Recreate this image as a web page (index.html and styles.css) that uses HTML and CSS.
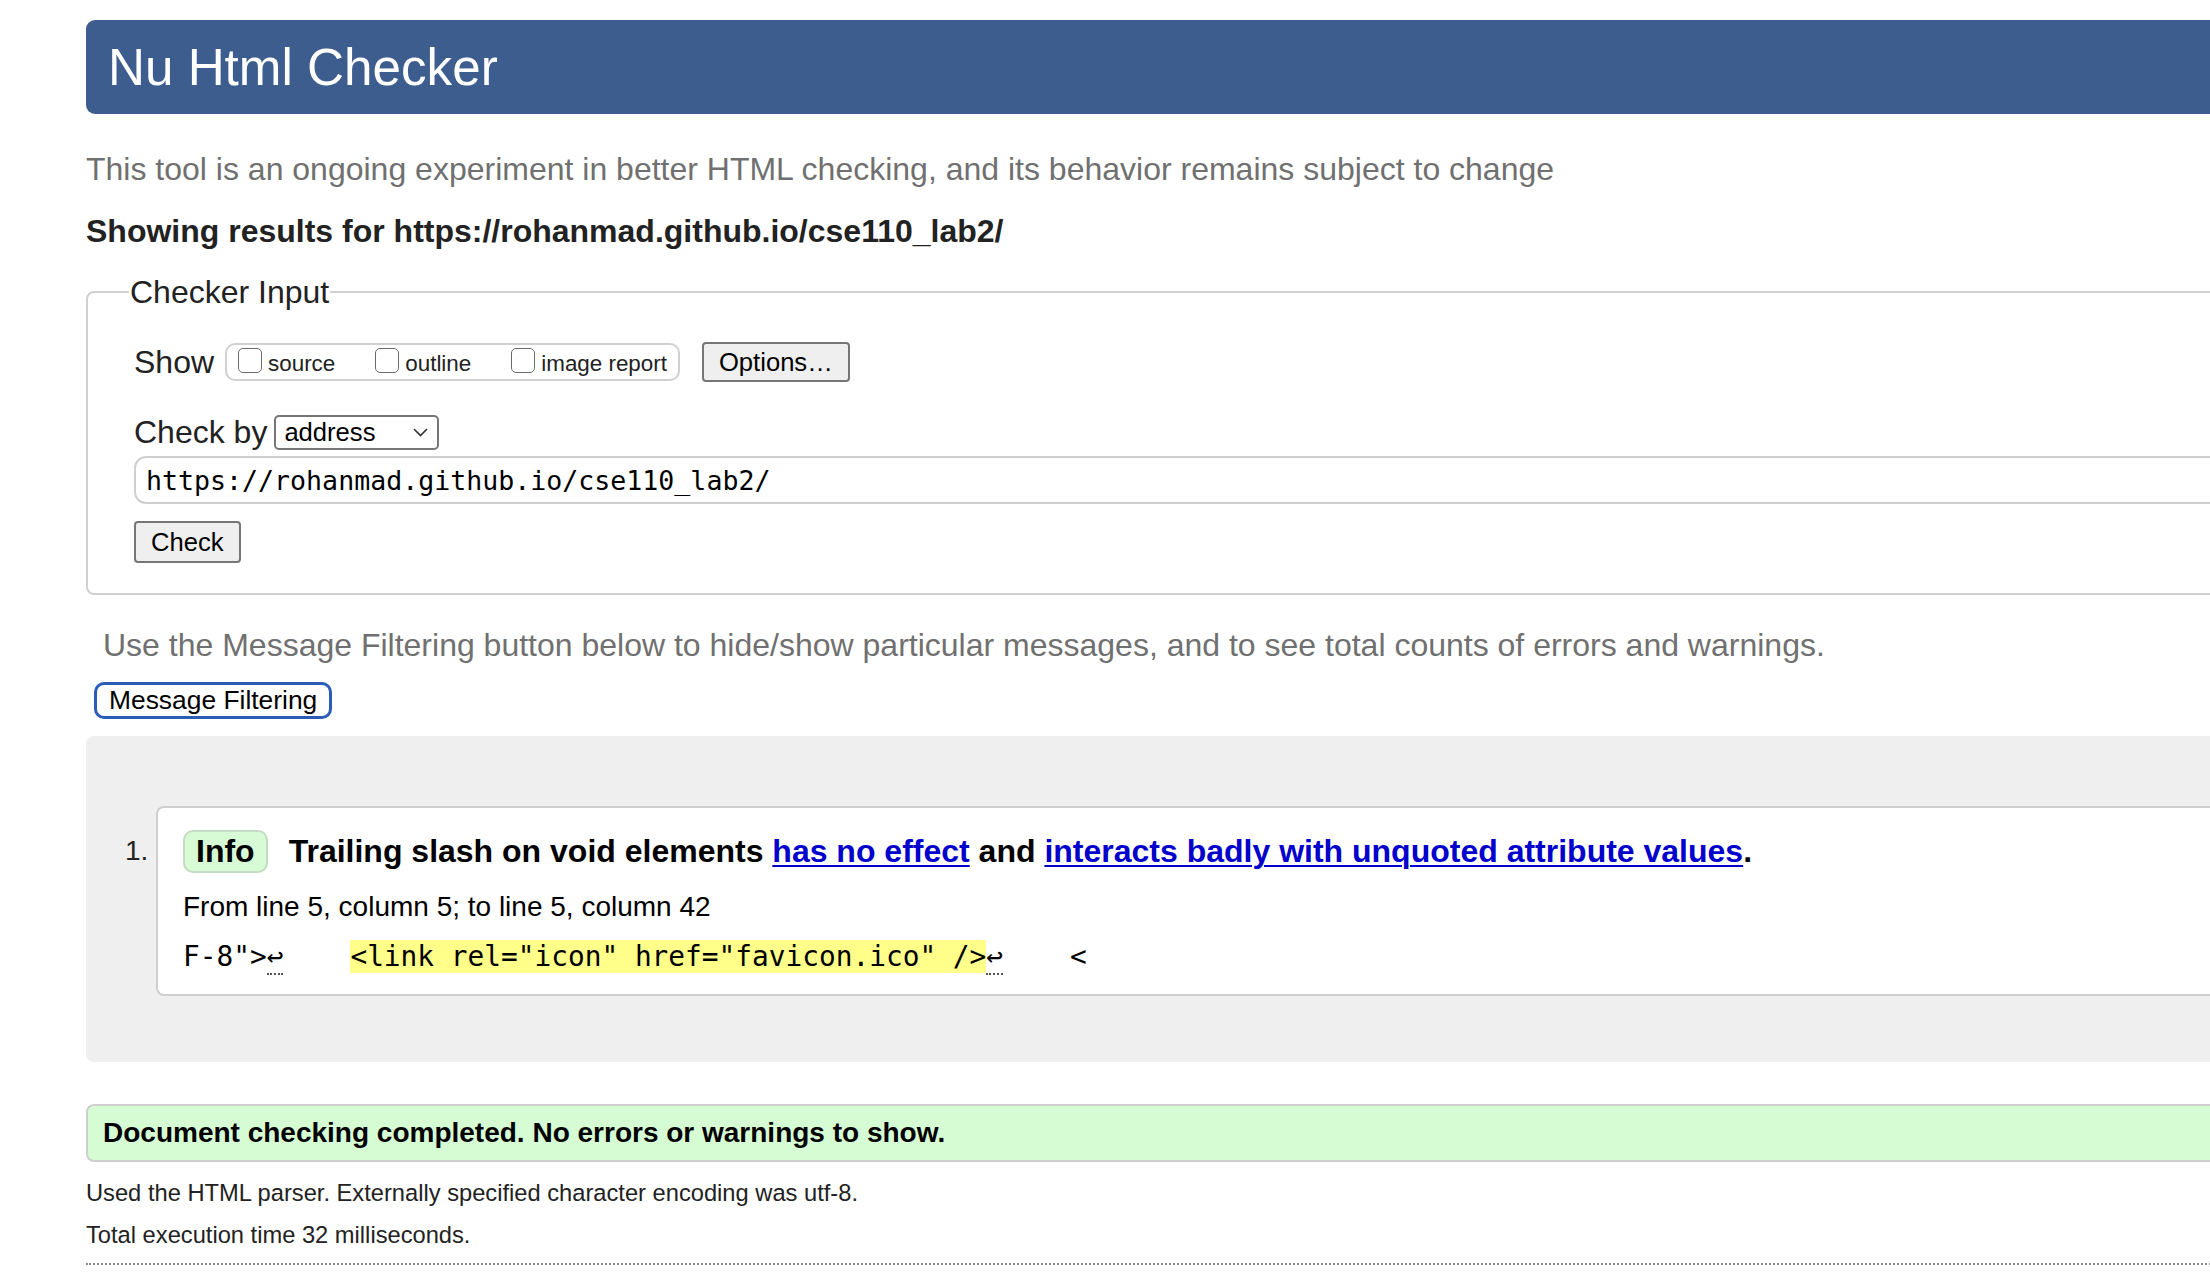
FILE: index.html
```html
<!DOCTYPE html>
<html lang="en">
<head>
<meta charset="utf-8">
<title>Showing results for https://rohanmad.github.io/cse110_lab2/ - Nu Html Checker</title>
<link rel="stylesheet" href="styles.css">
</head>
<body>
<div class="page">
  <h1 class="title">Nu Html Checker</h1>
  <p class="intro">This tool is an ongoing experiment in better HTML checking, and its behavior remains subject to change</p>
  <p class="showing">Showing results for https://rohanmad.github.io/cse110_lab2/</p>
  <form class="checker">
    <fieldset class="fs">
      <legend class="legend">Checker Input</legend>
      <div class="row row-show">
        <span class="label">Show</span>
        <span class="show-group">
          <label class="opt"><input type="checkbox" class="cb"><span>source</span></label>
          <label class="opt"><input type="checkbox" class="cb"><span>outline</span></label>
          <label class="opt"><input type="checkbox" class="cb"><span>image report</span></label>
        </span>
        <button type="button" class="btn options">Options…</button>
      </div>
      <div class="row row-by">
        <span class="label">Check by</span>
        <span class="select"><span>address</span><svg class="chev" width="15" height="9" viewBox="0 0 15 9"><polyline points="1,1 7.5,7.5 14,1" fill="none" stroke="#333" stroke-width="1.6"/></svg></span>
      </div>
      <input class="url" type="text" value="https://rohanmad.github.io/cse110_lab2/">
      <button type="button" class="btn check">Check</button>
    </fieldset>
  </form>
  <p class="filter-note">Use the Message Filtering button below to hide/show particular messages, and to see total counts of errors and warnings.</p>
  <button type="button" class="filter-btn">Message Filtering</button>
  <div class="results">
    <ol class="msgs">
      <li class="msg">
        <span class="num">1.</span>
        <div class="card">
          <p class="head"><strong class="badge">Info</strong><span>Trailing slash on void elements <a href="#">has no effect</a> and <a href="#">interacts badly with unquoted attribute values</a>.</span></p>
          <p class="loc">From line 5, column 5; to line 5, column 42</p>
          <p class="code">F-8"&gt;<b class="lf">↩</b>    <mark class="hl">&lt;link rel="icon" href="favicon.ico" /&gt;</mark><b class="lf">↩</b>    &lt;</p>
        </div>
      </li>
    </ol>
  </div>
  <p class="done">Document checking completed. No errors or warnings to show.</p>
  <p class="stats">Used the HTML parser. Externally specified character encoding was utf-8.</p>
  <p class="stats stats-time">Total execution time 32 milliseconds.</p>
  <hr class="sep">
</div>
</body>
</html>
```
FILE: styles.css
```css
html {
  overflow: hidden;
}
body {
  margin: 0;
  background: #fff;
  color: #222;
  font-family: "Liberation Sans", Arial, Helvetica, sans-serif;
}
.page {
  width: 2400px;
  padding: 20px 0 0 86px;
}
.title {
  margin: 0;
  height: 94px;
  box-sizing: border-box;
  display: flex;
  align-items: center;
  padding-left: 22px;
  background: #3e5d8f;
  color: #fff;
  font-size: 51.2px;
  font-weight: normal;
  border-radius: 9px 0 0 9px;
}
.intro {
  margin: 36px 0 0;
  font-size: 32px;
  line-height: 38px;
  color: #707070;
}
.showing {
  margin: 24px 0 0;
  font-size: 32px;
  line-height: 38px;
  font-weight: bold;
  color: #222;
}
.checker {
  margin: 23px 0 0;
}
.fs {
  margin: 0;
  min-width: 0;
  padding: 31px 0 30px 46px;
  border: 2px solid #d0d0d0;
  border-radius: 8px 0 0 8px;
}
.legend {
  margin-left: -5px;
  padding: 0 1px;
  font-size: 32px;
  line-height: 38px;
  color: #222;
}
.row {
  display: flex;
  align-items: center;
}
.row-show {
  height: 40px;
}
.label {
  font-size: 32px;
  line-height: 38px;
  color: #222;
}
.show-group {
  margin-left: 11px;
  display: flex;
  align-items: center;
  gap: 40px;
  height: 38px;
  box-sizing: border-box;
  border: 2px solid #d0d0d0;
  border-radius: 10px;
  padding: 0 11px;
}
.opt {
  display: flex;
  align-items: center;
  font-size: 22.4px;
  color: #222;
  padding-top: 4px;
}
.cb {
  -webkit-appearance: none;
  appearance: none;
  width: 24px;
  height: 25px;
  margin: 0 6px 8px 0;
  box-sizing: border-box;
  border: 1.5px solid #6b6b6b;
  border-radius: 5px;
  background: #fff;
}
.btn {
  font-family: "Liberation Sans", Arial, Helvetica, sans-serif;
  font-size: 25.6px;
  color: #000;
  background: #efefef;
  border: 2px solid #767676;
  border-radius: 4px;
  padding: 0 15px;
  box-sizing: border-box;
}
.options {
  margin-left: 22px;
  height: 40px;
}
.row-by {
  margin-top: 31px;
  height: 38px;
}
.select {
  margin-left: 7px;
  width: 165px;
  height: 35px;
  box-sizing: border-box;
  border: 2px solid #767676;
  border-radius: 5px;
  display: flex;
  align-items: center;
  justify-content: space-between;
  padding: 0 9px 0 8px;
  font-size: 25.6px;
  color: #000;
  background: #fff;
}
.chev {
  display: block;
}
.url {
  display: block;
  margin: 5px 0 0;
  width: 2300px;
  height: 48px;
  box-sizing: border-box;
  border: 2px solid #cfcfcf;
  border-radius: 12px;
  padding: 0 10px;
  font-family: "DejaVu Sans Mono", monospace;
  font-size: 26.6px;
  color: #000;
  background: #fff;
}
.check {
  display: block;
  margin-top: 17px;
  height: 42px;
}
.filter-note {
  margin: 31px 0 0;
  padding-left: 17px;
  font-size: 32px;
  line-height: 38px;
  color: #707070;
}
.filter-btn {
  display: block;
  margin: 18px 0 0 8px;
  height: 37px;
  box-sizing: border-box;
  border: 3px solid #2b5cb8;
  border-radius: 10px;
  background: #fff;
  padding: 0 12px;
  font-family: "Liberation Sans", Arial, Helvetica, sans-serif;
  font-size: 26.4px;
  color: #000;
}
.results {
  margin-top: 17px;
  background: #efefef;
  border-radius: 8px 0 0 8px;
  padding: 70px 0 66px 39px;
}
.msgs {
  list-style: none;
  margin: 0;
  padding: 0;
}
.msg {
  display: flex;
}
.num {
  width: 31px;
  flex: none;
  padding-top: 28px;
  font-size: 28px;
  line-height: 34px;
  color: #222;
}
.card {
  flex: 1;
  background: #fff;
  border: 2px solid #cfcfcf;
  border-right: none;
  border-radius: 8px 0 0 8px;
  padding: 22px 0 19px 25px;
  color: #000;
}
.head {
  display: flex;
  align-items: center;
  height: 43px;
  margin: 0;
  font-size: 32px;
  font-weight: bold;
  white-space: nowrap;
}
.badge {
  height: 43px;
  box-sizing: border-box;
  display: inline-flex;
  align-items: center;
  padding: 0 11px;
  background: #d7fbd5;
  border: 2px solid #c3dcc3;
  border-radius: 10px;
  margin-right: 21px;
}
.head a {
  color: #0000cc;
  text-decoration: underline;
  text-decoration-thickness: 2px;
  text-underline-offset: 3px;
}
.loc {
  margin: 17px 0 0;
  font-size: 28px;
  line-height: 34px;
}
.code {
  margin: 15px 0 0;
  font-family: "DejaVu Sans Mono", monospace;
  font-size: 27.8px;
  line-height: 36px;
  white-space: pre;
}
.hl {
  background: #ffff8a;
  color: #000;
}
.lf {
  font-weight: normal;
  border-bottom: 2px dotted #555;
}
.done {
  margin: 42px 0 0;
  height: 58px;
  box-sizing: border-box;
  border: 2px solid #cfcfcf;
  border-right: none;
  border-radius: 8px 0 0 8px;
  background: #d6fcd4;
  display: flex;
  align-items: center;
  padding-left: 15px;
  font-size: 28px;
  font-weight: bold;
  color: #000;
}
.stats {
  margin: 16px 0 0;
  font-size: 23.7px;
  line-height: 30px;
  color: #222;
}
.stats-time {
  margin-top: 12px;
}
.sep {
  margin: 13px 0 0;
  border: none;
  border-top: 2px dotted #888;
  height: 0;
}
```
